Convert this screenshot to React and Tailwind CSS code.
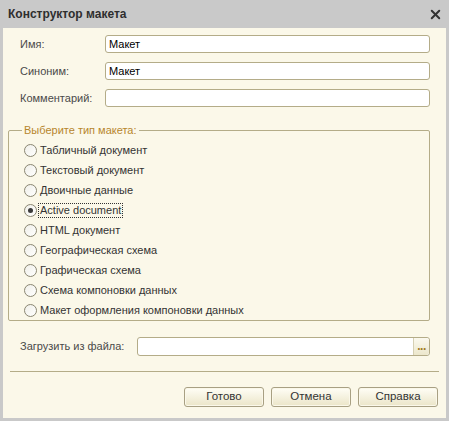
import { X } from 'lucide-react';

const options = [
  'Табличный документ',
  'Текстовый документ',
  'Двоичные данные',
  'Active document',
  'HTML документ',
  'Географическая схема',
  'Графическая схема',
  'Схема компоновки данных',
  'Макет оформления компоновки данных',
];

const Field = ({ label, value }) => (
  <div className="flex items-center h-[18px]">
    <span className="w-[85px] shrink-0">{label}</span>
    <div className="flex-1 h-[18px] bg-white border border-[#b4ac88] rounded-[3px] px-[3px] flex items-center text-black">
      {value}
    </div>
  </div>
);

const Radio = ({ checked }) => (
  <span className="w-[13px] h-[13px] rounded-full border border-[#8a8672] bg-gradient-to-br from-[#f0efe8] to-white flex items-center justify-center shrink-0">
    {checked && <span className="w-[5px] h-[5px] rounded-full bg-[#3a3a3a]" />}
  </span>
);

const Button = ({ children }) => (
  <button className="w-[80px] h-[20px] rounded-[3px] border border-[#a8a083] bg-gradient-to-b from-[#fffef6] to-[#ebe5c8] text-[#333] text-[11.5px] leading-none shadow-[inset_0_0_0_1px_#fbf8ea]">
    {children}
  </button>
);

export default function App() {
  return (
    <div className="w-[449px] h-[421px] flex flex-col bg-[#c9c9c9] text-[11px] text-[#4a4a4a]" style={{ fontFamily: '"Liberation Sans", Arial, sans-serif' }}>
      <div className="h-[28px] flex items-center justify-between pl-[8px] pr-[6px] shrink-0">
        <span className="font-bold text-[12px] text-[#2e2e2e]">Конструктор макета</span>
        <X size={15} strokeWidth={3.2} className="text-[#333]" />
      </div>
      <div className="flex-1 mx-[3px] mb-[3px] bg-[#fbf8e9] flex flex-col pt-[7px] px-[6px]">
        <div className="flex flex-col gap-[9px] pl-[11px] pr-[10px]">
          <Field label="Имя:" value="Макет" />
          <Field label="Синоним:" value="Макет" />
          <Field label="Комментарий:" value="" />
        </div>

        <fieldset className="mt-[16px] -ml-[1px] border border-[#b4ac88] rounded-[2px] pl-[17px] pr-[8px] pt-[3px] h-[198px] mr-[10px] text-[#333]">
          <legend className="px-[2px] text-[#b7862d] -ml-[4px] leading-[14px]">Выберите тип макета:</legend>
          <div className="flex flex-col -ml-[2px]">
            {options.map((o, i) => (
              <label key={o} className="flex items-center gap-[2px] h-[20px]">
                <Radio checked={i === 3} />
                <span className={i === 3 ? 'outline outline-1 outline-dotted outline-[#333] px-[1px] leading-[13px]' : 'px-[1px]'}>{o}</span>
              </label>
            ))}
          </div>
        </fieldset>

        <div className="flex items-center h-[18px] mt-[16px] pl-[11px] pr-[10px]">
          <span className="w-[117px] shrink-0">Загрузить из файла:</span>
          <div className="flex-1 h-[19px] bg-white border border-[#b4ac88] rounded-[3px] flex justify-end">
            <div className="w-[16px] h-full border-l border-[#d6d0b3] bg-gradient-to-b from-[#fbf9ee] to-[#ece7cc] rounded-r-[3px] flex items-end justify-center pb-[3px] text-[#a07a20] text-[12px] leading-none font-bold tracking-[-0.5px]">
              ...
            </div>
          </div>
        </div>

        <div className="mt-[16px] border-t border-[#b4ac88] mx-[1px]" />

        <div className="flex justify-end gap-[7px] mt-[15px] pr-[2px]">
          <Button>Готово</Button>
          <Button>Отмена</Button>
          <Button>Справка</Button>
        </div>
      </div>
    </div>
  );
}
